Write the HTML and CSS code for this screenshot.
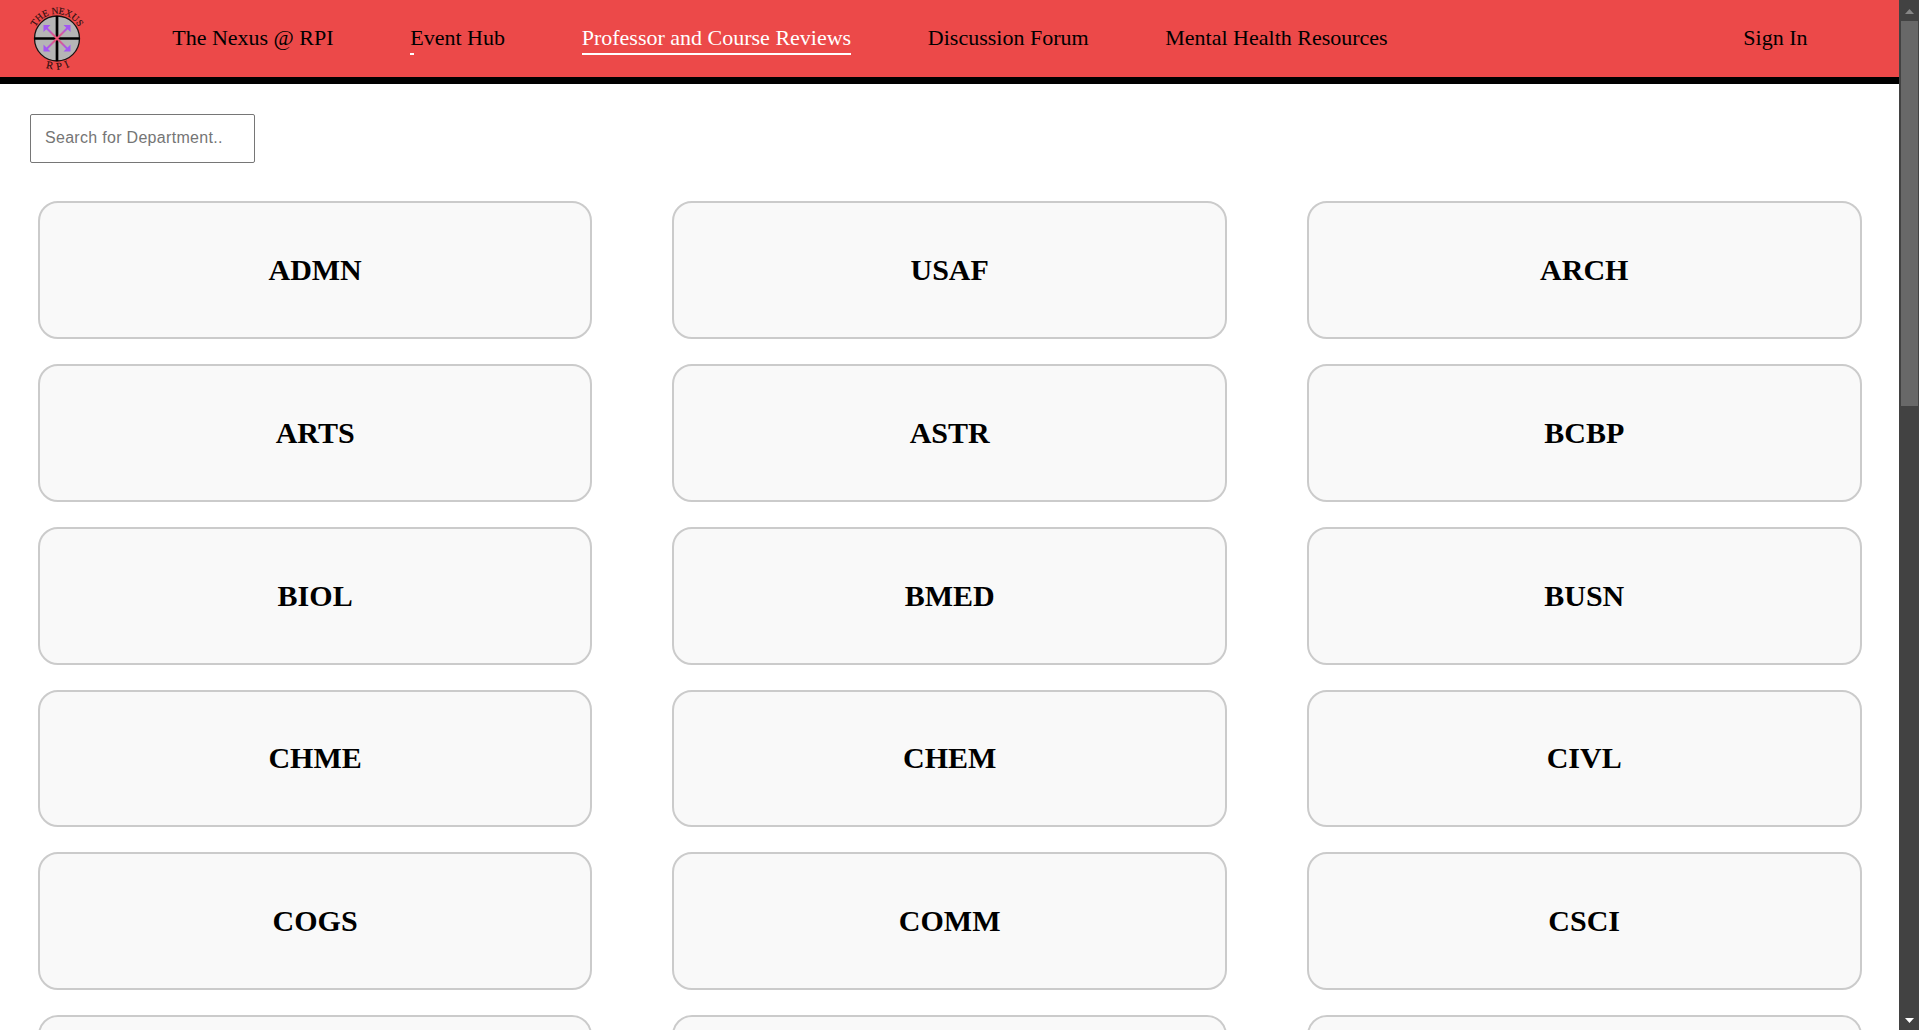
FILE: index.html
```html
<!DOCTYPE html>
<html lang="en">
<head>
<meta charset="utf-8">
<title>Professor and Course Reviews</title>
<link rel="stylesheet" href="styles.css">
</head>
<body>
<div class="page">
  <header class="navbar">
    <svg class="logo" viewBox="0 0 64 76" width="64" height="76">
      <defs>
        <radialGradient id="arrow" gradientUnits="userSpaceOnUse" cx="32" cy="38.5" r="17">
          <stop offset="0" stop-color="#f4506c"/>
          <stop offset=".4" stop-color="#d55a9c"/>
          <stop offset=".75" stop-color="#a855f0"/>
        </radialGradient>
        <path id="top-arc" d="M7.500 38.500a24.500 24.500 0 0 1 49 0"/>
        <path id="bottom-arc" d="M1 38.500a31 31 0 0 0 62 0"/>
      </defs>
      <circle cx="32" cy="38.500" r="22.500" fill="#b5b5b5" stroke="#1a1212" stroke-width="1.300"/>
      <path d="M32 16v45M9.500 38.500h45" stroke="#000" stroke-width="2.700"/>
      <path d="M20.500 27 43.500 50M43.500 27 20.500 50" stroke="url(#arrow)" stroke-width="2" fill="none"/>
      <path d="M18.500 25h7l-7 7zM45.500 25v7l-7-7zM18.500 51.500v-7l7 7zM45.500 51.500h-7l7-7z" fill="#a258f2"/>
      <text class="logo-text"><textPath href="#top-arc" startOffset="50%" text-anchor="middle">THE NEXUS</textPath></text>
      <text class="logo-text logo-rpi"><textPath href="#bottom-arc" startOffset="53%" text-anchor="middle">RPI</textPath></text>
    </svg>
    <nav class="links">
      <a class="link">The Nexus @ RPI</a>
      <a class="link entering">Event Hub</a>
      <a class="link active">Professor and Course Reviews</a>
      <a class="link">Discussion Forum</a>
      <a class="link">Mental Health Resources</a>
    </nav>
    <a class="link sign-in">Sign In</a>
  </header>
  <main class="content">
    <input class="search" type="text" placeholder="Search for Department..">
    <div class="grid">
      <div class="card">ADMN</div><div class="card">USAF</div><div class="card">ARCH</div>
      <div class="card">ARTS</div><div class="card">ASTR</div><div class="card">BCBP</div>
      <div class="card">BIOL</div><div class="card">BMED</div><div class="card">BUSN</div>
      <div class="card">CHME</div><div class="card">CHEM</div><div class="card">CIVL</div>
      <div class="card">COGS</div><div class="card">COMM</div><div class="card">CSCI</div>
      <div class="card"></div><div class="card"></div><div class="card"></div>
    </div>
  </main>
</div>
<div class="scrollbar">
  <svg class="arrow" viewBox="0 0 20 21" width="20" height="21"><path d="M6 14 10.500 9 15 14z" fill="#868686"/></svg>
  <div class="thumb"></div>
  <svg class="arrow arrow-down" viewBox="0 0 20 21" width="20" height="21"><path d="M6 9h9l-4.500 5z" fill="#fff"/></svg>
</div>
</body>
</html>
```
FILE: styles.css
```css
* { box-sizing: border-box; }

body {
  margin: 0;
  height: 1030px;
  display: flex;
  overflow: hidden;
  background: #fff;
  color: #000;
  font-family: "Liberation Serif", "Times New Roman", serif;
}

.page {
  width: 1899px;
  height: 1030px;
  overflow: hidden;
}

.navbar {
  height: 84px;
  display: flex;
  align-items: flex-start;
  padding: 0 91.5px 0 25px;
  background: #ec4949;
  border-bottom: 7px solid #000;
}

.logo { flex: none; }
.logo-text {
  font-family: "Liberation Serif", serif;
  font-size: 9.5px;
  fill: #2a0e0e;
  stroke: #2a0e0e;
  stroke-width: .15px;
}
.logo-text.logo-rpi {
  font-size: 10.5px;
  letter-spacing: 4px;
}

.links {
  display: flex;
  gap: 76.7px;
  margin-left: 83.2px;
}

.link {
  margin-top: 24px;
  height: 31px;
  font-size: 22px;
  line-height: 28px;
  white-space: nowrap;
  background: linear-gradient(#fff, #fff) left bottom / 0 2px no-repeat;
}
.link.entering { background-size: 4px 2px; }
.link.active {
  color: #fff;
  background-size: 100% 2px;
}
.sign-in { margin-left: auto; }

.content { padding: 30px 37.45px 0 37.8px; }

.search {
  display: block;
  width: 225px;
  height: 49px;
  margin: 0 0 38.2px -7.8px;
  padding: 0 14px 2px;
  border: 1px solid #767676;
  border-radius: 2px;
  font: 16px "Liberation Sans", Arial, sans-serif;
  letter-spacing: .3px;
}
.search::placeholder { color: #757575; }

.grid {
  display: grid;
  grid-template-columns: repeat(3, 1fr);
  grid-auto-rows: 137.8px;
  gap: 25px 79.9px;
}

.card {
  display: flex;
  align-items: center;
  justify-content: center;
  border: 2px solid #cbcbcb;
  border-radius: 20px;
  background: #f9f9f9;
  font-size: 30px;
  font-weight: bold;
}

.scrollbar {
  width: 20px;
  height: 1030px;
  display: flex;
  flex-direction: column;
  background: #424242;
}
.thumb {
  width: 17px;
  height: 385px;
  margin-left: 2px;
  background: #686868;
}
.arrow { flex: none; }
.arrow-down { margin-top: auto; }
```
